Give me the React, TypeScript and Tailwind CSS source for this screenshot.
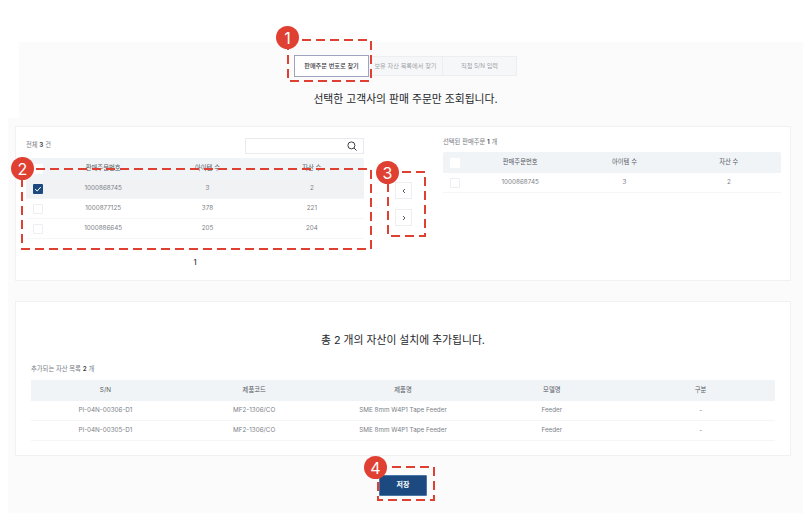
const font = "font-['Inter','Noto_Sans_CJK_KR',sans-serif]";

const leftRows = [
  { no: "1000868745", items: "3", assets: "2", checked: true },
  { no: "1000877125", items: "378", assets: "221", checked: false },
  { no: "1000886645", items: "205", assets: "204", checked: false },
];

const assets = [
  { sn: "PI-04N-00306-D1" },
  { sn: "PI-04N-00305-D1" },
];

function Checkbox({ checked, head }: { checked?: boolean; head?: boolean }) {
  if (checked) {
    return (
      <span className="flex h-[10px] w-[10px] items-center justify-center rounded-[1px] bg-[#1c4a80]">
        <svg width="8" height="8" viewBox="0 0 8 8" fill="none">
          <path d="M1.2 4.2 3.2 6 6.8 2" stroke="white" strokeWidth="1" />
        </svg>
      </span>
    );
  }
  return (
    <span
      className={`block h-[10px] w-[10px] rounded-[1px] bg-white ${head ? "" : "border border-[#eceef1]"}`}
    />
  );
}

function OrderTable({ rows, selectable }: { rows: typeof leftRows; selectable?: boolean }) {
  const cols = "grid-cols-[25px_1fr_1fr_1fr]";
  return (
    <div>
      <div className={`grid h-[21px] items-center rounded-t-[2px] bg-[#f1f4f7] text-center text-[6.3px] text-[#555b63] ${cols}`}>
        <span className="flex justify-center pr-[1px]"><Checkbox head /></span>
        <span>판매주문번호</span>
        <span>아이템 수</span>
        <span>자산 수</span>
      </div>
      {rows.map((r) => (
        <div
          key={r.no}
          className={`grid h-5 items-center border-b border-[#f5f6f8] pt-px text-center text-[6.3px] text-[#7c8187] ${cols} ${r.checked && selectable ? "bg-[#f0f2f4]" : ""}`}
        >
          <span className="flex justify-center pr-[1px]"><Checkbox checked={r.checked && selectable} /></span>
          <span>{r.no}</span>
          <span>{r.items}</span>
          <span>{r.assets}</span>
        </div>
      ))}
    </div>
  );
}

function Mark({ n, className }: { n: number; className: string }) {
  return (
    <span className={`absolute flex h-[23px] w-[23px] items-center justify-center rounded-full bg-[#e04032] text-[16px] text-white ${className}`}>
      {n}
    </span>
  );
}

function DashBox({ w, h, className }: { w: number; h: number; className: string }) {
  return (
    <svg className={`absolute ${className}`} width={w} height={h} fill="none">
      <rect x="1" y="1" width={w - 2} height={h - 2} stroke="#e04032" strokeWidth="2" strokeDasharray="9 5" />
    </svg>
  );
}

export default function App() {
  return (
    <div className={`relative h-[513px] w-[803px] overflow-hidden bg-white pt-[42px] ${font}`}>
      <div className="ml-[19px] h-[76px] bg-[#fbfbfb] pt-[14px]">
        <div className="flex justify-center pr-[11px]">
          <div className="flex h-[20px] text-[6.2px]">
            <div className="-my-px flex h-[22px] w-[75px] items-center justify-center border border-[#9ea4c0] bg-white font-medium text-[#3c4046]">
              판매주문 번호로 찾기
            </div>
            <div className="flex w-[73px] items-center justify-center border-y border-[#eceef1] bg-[#f6f7f8] text-[#a0a4a9]">
              보유 자산 목록에서 찾기
            </div>
            <div className="flex w-[75px] items-center justify-center border border-[#eceef1] bg-[#f6f7f8] text-[#a0a4a9]">
              직접 S/N 입력
            </div>
          </div>
        </div>
        <h2 className="mt-[16px] pr-[11px] text-center text-[10.8px] font-normal leading-[16px] text-[#25282c]">
          선택한 고객사의 판매 주문만 조회됩니다.
        </h2>
      </div>

      <div className="ml-2 h-[395px] bg-[#fbfbfb] pt-2">
        <section className="ml-[7px] flex h-[155px] w-[776px] border border-[#f0f1f3] bg-white pl-[10px] pt-[10px]">
          <div className="w-[338px]">
            <div className="flex h-[18px] items-center justify-between">
              <span className="text-[6.3px] text-[#777c82]">
                전체 <b className="font-semibold text-[#3c4046]">3</b> 건
              </span>
              <div className="flex h-[16px] w-[119px] items-center justify-end border border-[#e8eaed] pr-[6px] text-[#3c4046]">
                <svg width="10" height="10" viewBox="0 0 10 10" fill="none" stroke="currentColor" strokeWidth="1">
                  <circle cx="4.4" cy="4.4" r="3.5" />
                  <path d="m7 7 2.6 2.6" />
                </svg>
              </div>
            </div>
            <div className="mt-[3px]">
              <OrderTable rows={leftRows} selectable />
            </div>
            <div className="mt-[18px] text-center text-[7.5px] font-medium text-[#33373c]">1</div>
          </div>
          <div className="ml-[31px] flex w-[17px] flex-col gap-[10px] pt-[45px]">
            <span className="flex h-[17px] w-[17px] items-center justify-center border border-[#eceef1] bg-white text-[#555b63]">
              <svg width="6" height="6" viewBox="0 0 6 6" fill="none" stroke="currentColor"><path d="M4 1 2 3l2 2" /></svg>
            </span>
            <span className="flex h-[17px] w-[17px] items-center justify-center border border-[#eceef1] bg-white text-[#555b63]">
              <svg width="6" height="6" viewBox="0 0 6 6" fill="none" stroke="currentColor"><path d="m2 1 2 2-2 2" /></svg>
            </span>
          </div>
          <div className="ml-[31px] w-[338px]">
            <div className="mb-[3px] flex h-[12px] items-center text-[6.3px] text-[#777c82]">
              <span>선택된 판매주문 <b className="font-semibold text-[#3c4046]">1</b> 개</span>
            </div>
            <OrderTable rows={leftRows.slice(0, 1)} />
          </div>
        </section>

        <section className="ml-[7px] mt-[20px] h-[155px] w-[776px] border border-[#f0f1f3] bg-white px-[15px] pt-[31px]">
          <h2 className="text-center text-[10.8px] font-normal leading-[16px] text-[#25282c]">
            총 2 개의 자산이 설치에 추가됩니다.
          </h2>
          <p className="mt-[14px] h-[12px] text-[6.3px] leading-[12px] text-[#777c82]">
            추가되는 자산 목록 <b className="font-semibold text-[#3c4046]">2</b> 개
          </p>
          <div className="mt-[5px]">
            <div className="grid h-[21px] grid-cols-5 items-center bg-[#f1f4f7] text-center text-[6.3px] text-[#555b63]">
              <span>S/N</span>
              <span>제품코드</span>
              <span>제품명</span>
              <span>모델명</span>
              <span>구분</span>
            </div>
            {assets.map((a) => (
              <div key={a.sn} className="grid h-5 grid-cols-5 items-center border-b border-[#f5f6f8] pt-px text-center text-[6.3px] text-[#7c8187]">
                <span>{a.sn}</span>
                <span>MF2-1306/CO</span>
                <span>SME 8mm W4P1 Tape Feeder</span>
                <span>Feeder</span>
                <span>-</span>
              </div>
            ))}
          </div>
        </section>

        <div className="mt-[19px] flex justify-center pr-[5px]">
          <button className="flex h-[21px] w-[48px] items-center justify-center rounded-[1px] border border-[#4a76a8] bg-[#1c4a80] text-[7px] font-semibold text-white">
            저장
          </button>
        </div>
      </div>

      <DashBox w={85} h={43} className="left-[287px] top-[39px]" />
      <DashBox w={351} h={82} className="left-[21px] top-[168px]" />
      <DashBox w={39} h={66} className="left-[387px] top-[171px]" />
      <DashBox w={58} h={35} className="left-[377px] top-[466px]" />
      <Mark n={1} className="left-[276px] top-[26px]" />
      <Mark n={2} className="left-[11px] top-[157px]" />
      <Mark n={3} className="left-[376px] top-[161px]" />
      <Mark n={4} className="left-[364px] top-[456px]" />
    </div>
  );
}
